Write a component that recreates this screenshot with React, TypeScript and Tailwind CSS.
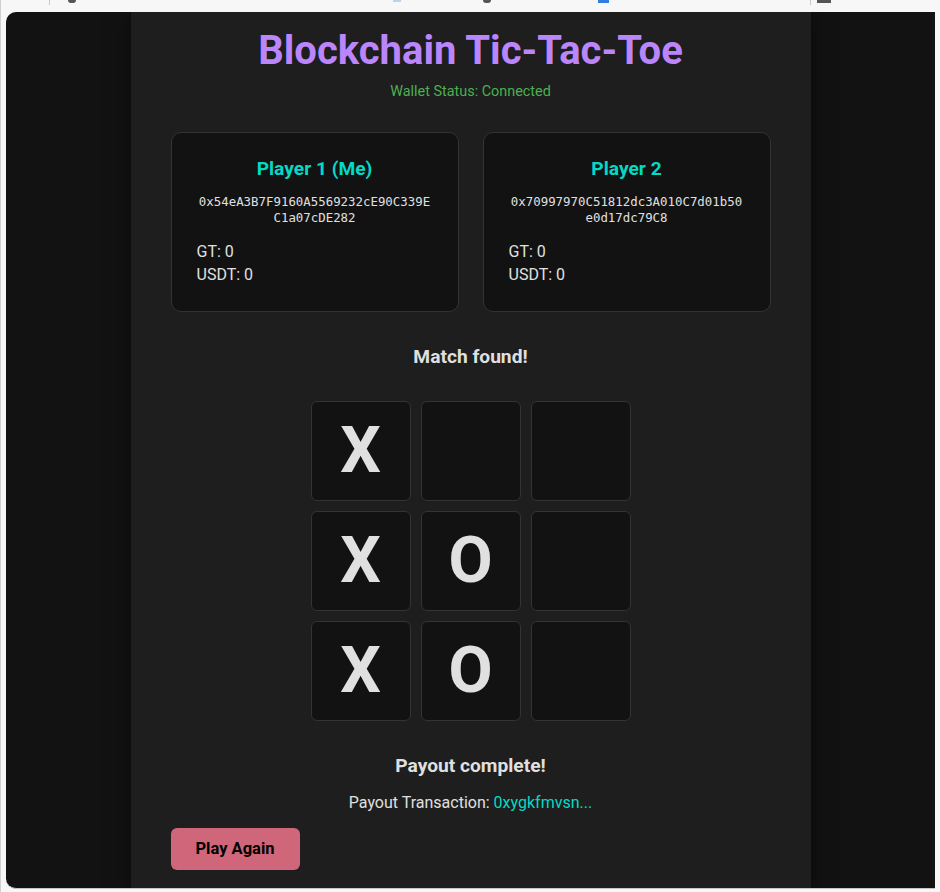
import React from 'react';

const board = ['X', '', '', 'X', 'O', '', 'X', 'O', ''];

const players = [
    { name: 'Player 1 (Me)', address: '0x54eA3B7F9160A5569232cE90C339EC1a07cDE282' },
    { name: 'Player 2', address: '0x70997970C51812dc3A010C7d01b50e0d17dc79C8' },
];

function PlayerCard({ name, address }: { name: string; address: string }) {
    return (
        <div className="flex-1 bg-[#121212] border border-[#333] rounded-[10px] pt-[24px] pb-[25px] px-[25px]">
            <h3 className="text-center text-[19.2px] leading-[24px] font-bold text-[#03dac6]">{name}</h3>
            <p className="mt-[13px] text-center text-[12.4px] leading-[16px] text-[#e0e0e0] break-all font-['DejaVu_Sans_Mono',monospace]">
                {address}
            </p>
            <div className="mt-[14px] text-[16px] leading-[23px] text-[#e0e0e0]">
                <p>GT: 0</p>
                <p>USDT: 0</p>
            </div>
        </div>
    );
}

export default function App() {
    return (
        <div className="w-[940px] h-[892px] overflow-hidden bg-[#f7f7f7] border-l border-[#d0d0d0] font-['Roboto',sans-serif]">
            {/* browser chrome remnants */}
            <div className="h-[12px] flex items-start">
                <div className="ml-[48px] w-px h-[5px] bg-[#c8c8c8]" />
                <div className="ml-[18px] w-[8px] h-[3px] rounded-b-full bg-[#555]" />
                <div className="ml-[317px] w-[8px] h-[2px] bg-[#bcd3f5]" />
                <div className="ml-[82px] w-[8px] h-[3px] rounded-b-full bg-[#555]" />
                <div className="ml-[107px] w-[11px] h-[3px] bg-[#2f7de1]" />
                <div className="ml-[201px] w-px h-[5px] bg-[#c8c8c8]" />
                <div className="ml-[6px] w-[14px] h-[3px] bg-[#555]" />
            </div>

            <div className="ml-[5px] w-[929px] h-[877px] rounded-l-[10px] bg-[#121212] overflow-hidden border-b border-[#c4c4c4]">
                <div className="mx-auto w-[680px] min-h-full bg-[#1e1e1e] shadow-[0_0_20px_rgba(0,0,0,0.5)] px-[40px] pt-[15px] pb-[30px]">
                    <h1 className="text-center text-[40px] leading-[48px] font-bold text-[#bb86fc]">Blockchain Tic-Tac-Toe</h1>
                    <p className="mt-[7px] text-center text-[14.4px] leading-[20px] text-[#4caf50]">Wallet Status: Connected</p>

                    <div className="mt-[30px] flex gap-[24px]">
                        {players.map((p) => (
                            <PlayerCard key={p.name} name={p.name} address={p.address} />
                        ))}
                    </div>

                    <h2 className="mt-[31px] text-center text-[19.2px] leading-[28px] font-bold text-[#e0e0e0]">Match found!</h2>

                    <div className="mt-[30px] mx-auto w-[320px] grid grid-cols-3 gap-[10px]">
                        {board.map((c, i) => (
                            <div
                                key={i}
                                className="h-[100px] bg-[#121212] border border-[#333] rounded-[6px] flex items-center justify-center text-[64px] font-bold text-[#e0e0e0]"
                            >
                                {c}
                            </div>
                        ))}
                    </div>

                    <h2 className="mt-[31px] text-center text-[19.2px] leading-[28px] font-bold text-[#e0e0e0]">Payout complete!</h2>
                    <p className="mt-[11px] text-center text-[16px] leading-[24px] text-[#e0e0e0]">
                        Payout Transaction: <span className="text-[#03dac6]">0xygkfmvsn...</span>
                    </p>

                    <button className="mt-[13px] w-[129px] h-[42px] rounded-[6px] bg-[#cf6679] text-black text-[16.5px] font-bold">
                        Play Again
                    </button>
                </div>
            </div>
        </div>
    );
}
